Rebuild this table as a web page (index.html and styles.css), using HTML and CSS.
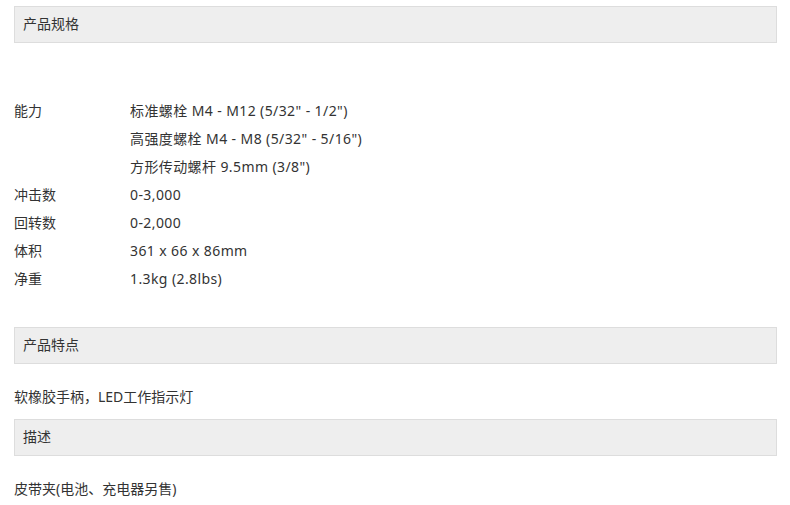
FILE: index.html
```html
<!DOCTYPE html>
<html lang="zh-CN">
<head>
<meta charset="utf-8">
<title>产品规格</title>
<link rel="stylesheet" href="styles.css">
</head>
<body>
<div class="page">
  <div class="section-title">产品规格</div>
  <div class="specs">
    <div class="spec-row">
      <div class="spec-label">能力</div>
      <div class="spec-values">
        <div class="spec-value">标准螺栓 M4 - M12 (5/32" - 1/2")</div>
        <div class="spec-value">高强度螺栓 M4 - M8 (5/32" - 5/16")</div>
        <div class="spec-value">方形传动螺杆 9.5mm (3/8")</div>
      </div>
    </div>
    <div class="spec-row">
      <div class="spec-label">冲击数</div>
      <div class="spec-values"><div class="spec-value">0-3,000</div></div>
    </div>
    <div class="spec-row">
      <div class="spec-label">回转数</div>
      <div class="spec-values"><div class="spec-value">0-2,000</div></div>
    </div>
    <div class="spec-row">
      <div class="spec-label">体积</div>
      <div class="spec-values"><div class="spec-value">361 x 66 x 86mm</div></div>
    </div>
    <div class="spec-row">
      <div class="spec-label">净重</div>
      <div class="spec-values"><div class="spec-value">1.3kg (2.8lbs)</div></div>
    </div>
  </div>
  <div class="section-title">产品特点</div>
  <p class="section-text">软橡胶手柄，LED工作指示灯</p>
  <div class="section-title">描述</div>
  <p class="section-text">皮带夹(电池、充电器另售)</p>
</div>
</body>
</html>
```

FILE: styles.css
```css
html, body {
  margin: 0;
  padding: 0;
  background: #fff;
}
body {
  font-family: "Noto Sans", "Noto Sans CJK SC", sans-serif;
  font-size: 14px;
  color: #333;
}
.page {
  width: 763px;
  padding: 6px 0 0 14px;
}
.section-title {
  box-sizing: border-box;
  height: 37px;
  border: 1px solid #dddddd;
  background: #eeeeee;
  padding: 0 8px;
  line-height: 33px;
  color: #333;
}
.specs {
  margin: 54px 0 34px;
}
.spec-row {
  display: flex;
}
.spec-label {
  width: 116px;
  line-height: 28px;
}
.spec-values {
  display: flex;
  flex-direction: column;
}
.spec-value {
  line-height: 28px;
  letter-spacing: 0.4px;
}
.section-text {
  margin: 19px 0 8px;
  line-height: 28px;
}
```
